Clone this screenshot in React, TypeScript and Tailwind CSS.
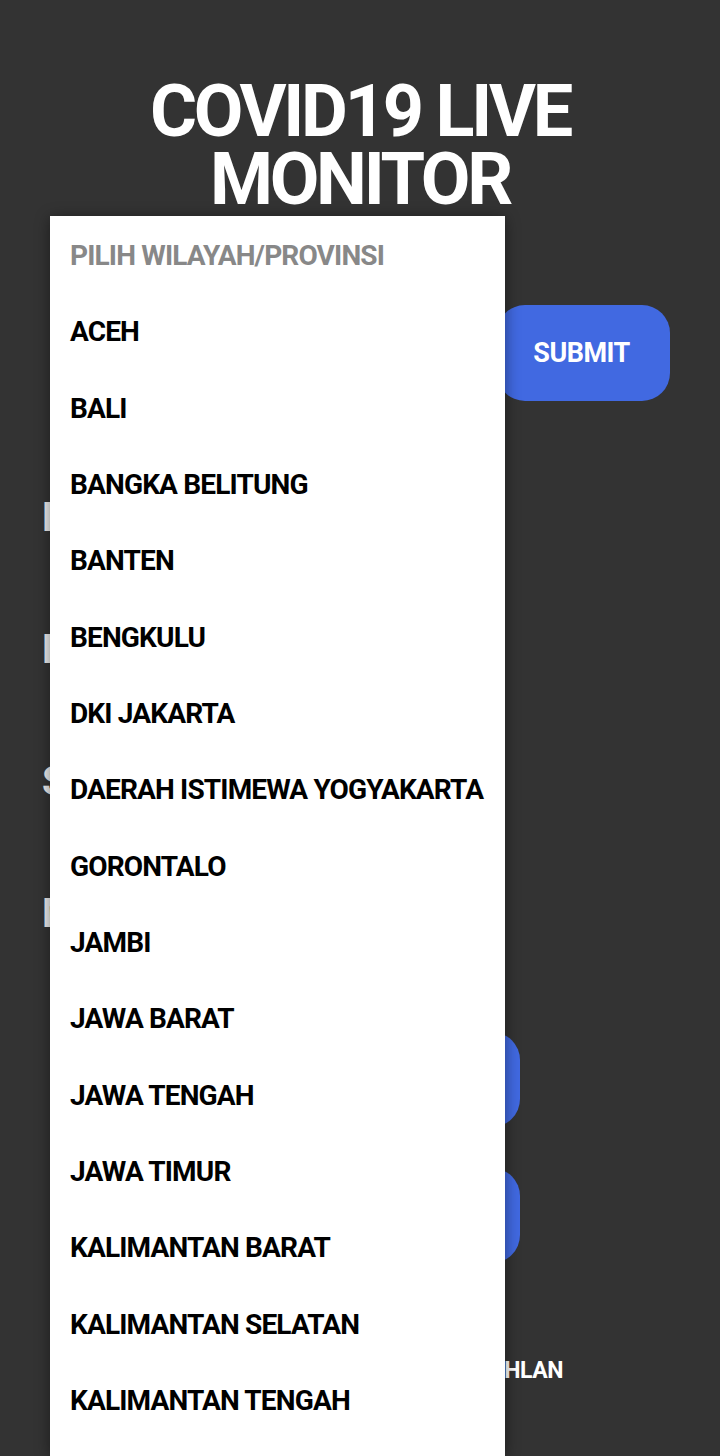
import React from "react";

const provinces = [
  "ACEH",
  "BALI",
  "BANGKA BELITUNG",
  "BANTEN",
  "BENGKULU",
  "DKI JAKARTA",
  "DAERAH ISTIMEWA YOGYAKARTA",
  "GORONTALO",
  "JAMBI",
  "JAWA BARAT",
  "JAWA TENGAH",
  "JAWA TIMUR",
  "KALIMANTAN BARAT",
  "KALIMANTAN SELATAN",
  "KALIMANTAN TENGAH",
];

const labels = ["POSITIF", "PERAWATAN", "SEMBUH", "MENINGGAL"];

export default function App() {
  return (
    <main
      className="relative w-[720px] h-[1456px] overflow-hidden bg-[#333333] flex flex-col pt-[78px] text-white"
      style={{ fontFamily: "Roboto, 'Noto Sans', sans-serif" }}
    >
      {/* title */}
      <h1 className="text-[72px] leading-[68px] font-bold text-center tracking-[-0.045em]">
        COVID19 LIVE
        <br />
        MONITOR
      </h1>

      {/* select + submit */}
      <div className="mt-[91px] flex items-center">
        <div className="ml-[38px] w-[450px] h-[96px]"></div>
        <button className="ml-auto mr-[50px] w-[173px] h-[96px] rounded-[28px] bg-[#4169e1] text-[27px] font-bold text-white tracking-[-0.02em] pr-[4px]">
          SUBMIT
        </button>
      </div>

      {/* stats */}
      <div className="mt-[51px] flex flex-col pl-[42px]">
        {labels.map((label) => (
          <p key={label} className="text-[40px] leading-[132px] font-bold text-[#eeeeee]">
            {label}
          </p>
        ))}
      </div>

      {/* buttons */}
      <div className="mt-[52px] flex flex-col gap-[41px]">
        <button className="mx-auto w-[320px] h-[95px] rounded-[28px] bg-[#4169e1]"></button>
        <button className="mx-auto w-[320px] h-[95px] rounded-[28px] bg-[#4169e1]"></button>
      </div>

      {/* footer */}
      <p className="mt-[92px] w-[563px] text-right text-[23px] leading-[32px] font-bold tracking-[-0.02em]">
        DIBUAT OLEH FADHLAN
      </p>

      {/* dropdown */}
      <div className="absolute left-[50px] top-[216px] bottom-0 w-[455px] pt-[2px] bg-white shadow-[0_2px_14px_rgba(0,0,0,0.45)] flex flex-col">
        <div className="h-[76.33px] shrink-0 px-5 flex items-center text-[28px] font-bold text-[#888888] tracking-[-0.03em]">
          PILIH WILAYAH/PROVINSI
        </div>
        {provinces.map((name) => (
          <div
            key={name}
            className="h-[76.33px] shrink-0 px-5 flex items-center text-[28px] font-bold text-black tracking-[-0.03em]"
          >
            {name}
          </div>
        ))}
      </div>
    </main>
  );
}
